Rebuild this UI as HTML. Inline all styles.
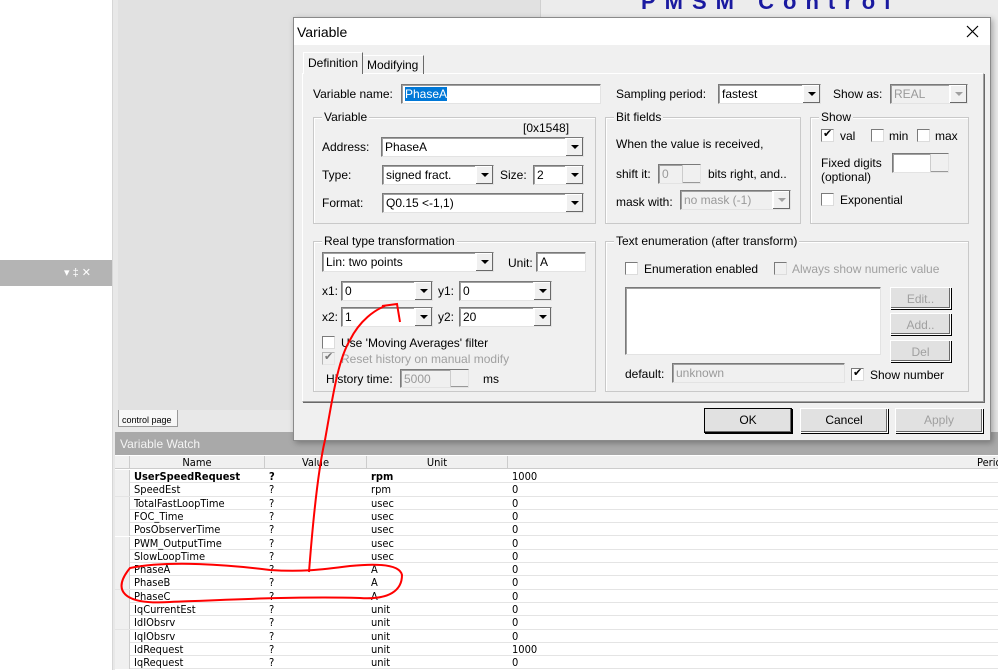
<!DOCTYPE html>
<html><head><meta charset="utf-8"><style>
*{margin:0;padding:0;box-sizing:border-box}
body{width:998px;height:670px;overflow:hidden;position:relative;background:#e1e1e1;font-family:"Liberation Sans",sans-serif;font-size:12px;color:#000}
.a{position:absolute}
.t{position:absolute;white-space:nowrap;line-height:14px}
.in{position:absolute;background:#fff;border:1px solid #7a7a7a;border-right-color:#e3e3e3;border-bottom-color:#e3e3e3;box-shadow:inset 1px 1px 0 #a0a0a0;padding:1px 3px;line-height:16px;white-space:nowrap}
.dd::after{content:"";position:absolute;right:0;top:0;bottom:0;width:17px;background:#f0f0f0;border-left:1px solid #fff;box-shadow:inset -1px -1px 0 #696969,inset 1px 1px 0 #fff}
.dd::before{content:"";position:absolute;right:4px;top:7px;border:4px solid transparent;border-top:4px solid #000;border-bottom:0;z-index:2}
.dis{background:#f0f0f0;color:#9a9a9a}
.dis.dd::before{border-top-color:#a0a0a0}
.sp::after{content:"";position:absolute;right:0;top:0;bottom:0;width:17px;background:#f0f0f0;border-left:1px solid #ccc;box-shadow:inset 0 -9px 0 -8px #999}
.grp{position:absolute;border:1px solid #c9c9c9;box-shadow:1px 1px 0 #fff inset}
.gl{position:absolute;top:-8px;left:8px;background:#f0f0f0;padding:0 2px;line-height:14px;white-space:nowrap}
.cb{position:absolute;width:13px;height:13px;background:#fff;border:1px solid #7a7a7a;border-right-color:#dcdcdc;border-bottom-color:#dcdcdc}
.cb.dis{background:#f0f0f0}
.chk::after{content:"✔";position:absolute;left:1px;top:-3px;font-size:11px;color:#000}
.btn{position:absolute;background:#e1e1e1;border:1px solid #fff;box-shadow:inset -1px -1px 0 #696969,1px 1px 0 #000 ;text-align:center;line-height:22px}
.g{color:#a0a0a0}
.row{position:absolute;left:115px;width:883px;height:13.3px;border-bottom:1px solid #e4e4e4;background:#fff;font-size:11px;line-height:13px;font-family:"DejaVu Sans Condensed","Liberation Sans",sans-serif}
.row span{position:absolute;top:0}
</style></head><body>
<div class="a" style="left:0;top:0;width:112px;height:670px;background:#fff"></div>
<div class="a" style="left:112px;top:0;width:6px;height:670px;background:#e8e8e8;border-left:1px solid #d6d6d6"></div>
<div class="a" style="left:0;top:260px;width:112px;height:26px;background:#b4b4b4"></div>
<div class="t" style="left:64px;top:266px;color:#fff;font-size:11px">▾ ‡ ✕</div>
<div class="a" style="left:540px;top:0;width:458px;height:17px;background:#ececec;border-left:1px solid #d0d0d0;overflow:hidden"><div class="t" style="left:100px;top:-10px;color:#1a1aa0;font-size:22px;line-height:24px;font-weight:bold;letter-spacing:9px">PMSM&nbsp;Control</div></div>
<div class="a" style="left:991px;top:17px;width:7px;height:420px;background:#ececec"></div>
<div class="a" style="left:118px;top:300px;width:175px;height:126px;background:#e1e1e1"></div>
<div class="a" style="left:118px;top:410px;width:880px;height:22px;background:#e8e8e8"></div>
<div class="a" style="left:118px;top:410px;width:60px;height:17px;background:#f7f7f7;border:1px solid #999;border-top:none"></div>
<div class="t" style="left:122px;top:413px;font-size:9px">control page</div>
<div class="a" style="left:115px;top:432px;width:883px;height:23px;background:#a9a9a9"></div>
<div class="t" style="left:120px;top:437px;color:#f4f4f4;font-size:12px">Variable Watch</div>
<div class="a" style="left:115px;top:455px;width:883px;height:215px;background:#fff"></div>
<div class="row" style="top:456px;background:#f0f0f0;border-bottom:1px solid #ccc">
<span style="left:0;width:15px;height:13px;border-right:1px solid #ccc"></span>
<span style="left:15px;width:135px;text-align:center;border-right:1px solid #ccc">Name</span>
<span style="left:150px;width:102px;text-align:center;border-right:1px solid #ccc">Value</span>
<span style="left:252px;width:141px;text-align:center;border-right:1px solid #ccc">Unit</span>
<span style="left:862px">Perio</span></div>
<div id="rows"></div>
<div class="a" style="left:293px;top:17px;width:698px;height:424px;background:#f0f0f0;border:1px solid #8a8a8a;box-shadow:2px 2px 6px rgba(0,0,0,.3)"></div>
<div class="a" style="left:294px;top:18px;width:696px;height:27px;background:#fff"></div>
<div class="t" style="left:297px;top:24px;font-size:14px;line-height:16px">Variable</div>
<svg class="a" style="left:966px;top:25px" width="13" height="13"><path d="M1 1L12 12M12 1L1 12" stroke="#000" stroke-width="1.2"/></svg>
<div class="a" style="left:302px;top:73px;width:682px;height:329px;border:1px solid #fff;border-right-color:#a0a0a0;border-bottom-color:#a0a0a0;box-shadow:1px 1px 0 #696969"></div>
<div class="a" style="left:303px;top:52px;width:60px;height:23px;background:#f0f0f0;border:1px solid #fff;border-bottom:none;border-right:1px solid #696969"></div>
<div class="t" style="left:308px;top:56px">Definition</div>
<div class="a" style="left:363px;top:55px;width:61px;height:19px;border-top:1px solid #fff;border-right:1px solid #696969"></div>
<div class="t" style="left:367px;top:58px">Modifying</div>
<div class="a" style="left:303px;top:74px;width:60px;height:2px;background:#f0f0f0"></div>
<div class="t" style="left:313px;top:87px">Variable name:</div>
<div class="in" style="left:401px;top:84px;width:200px;height:20px"><span style="background:#0078d7;color:#fff">PhaseA</span></div>
<div class="t" style="left:616px;top:87px">Sampling period:</div>
<div class="in dd" style="left:718px;top:84px;width:103px;height:20px">fastest</div>
<div class="t" style="left:833px;top:87px">Show as:</div>
<div class="in dd dis" style="left:890px;top:84px;width:78px;height:20px">REAL</div>
<div class="grp" style="left:313px;top:117px;width:283px;height:107px"><div class="gl">Variable</div></div>
<div class="t" style="left:523px;top:121px">[0x1548]</div>
<div class="t" style="left:322px;top:140px">Address:</div>
<div class="in dd" style="left:381px;top:137px;width:203px;height:20px">PhaseA</div>
<div class="t" style="left:322px;top:168px">Type:</div>
<div class="in dd" style="left:382px;top:165px;width:112px;height:20px">signed fract.</div>
<div class="t" style="left:500px;top:168px">Size:</div>
<div class="in dd" style="left:533px;top:165px;width:51px;height:20px">2</div>
<div class="t" style="left:322px;top:196px">Format:</div>
<div class="in dd" style="left:382px;top:193px;width:202px;height:20px">Q0.15 &lt;-1,1)</div>
<div class="grp" style="left:605px;top:117px;width:196px;height:107px"><div class="gl">Bit fields</div></div>
<div class="t" style="left:616px;top:137px">When the value is received,</div>
<div class="t" style="left:616px;top:167px">shift it:</div>
<div class="in dis sp" style="left:658px;top:164px;width:43px;height:20px">0</div>
<div class="t" style="left:708px;top:167px">bits right, and..</div>
<div class="t" style="left:616px;top:195px">mask with:</div>
<div class="in dd dis" style="left:680px;top:190px;width:111px;height:20px">no mask (-1)</div>
<div class="grp" style="left:810px;top:117px;width:159px;height:107px"><div class="gl">Show</div></div>
<div class="cb chk" style="left:821px;top:129px"></div><div class="t" style="left:840px;top:129px">val</div>
<div class="cb" style="left:871px;top:129px"></div><div class="t" style="left:889px;top:129px">min</div>
<div class="cb" style="left:917px;top:129px"></div><div class="t" style="left:935px;top:129px">max</div>
<div class="t" style="left:821px;top:156px">Fixed digits<br>(optional)</div>
<div class="in sp" style="left:892px;top:153px;width:57px;height:20px"></div>
<div class="cb" style="left:821px;top:193px"></div><div class="t" style="left:840px;top:193px">Exponential</div>
<div class="grp" style="left:313px;top:241px;width:283px;height:151px"><div class="gl">Real type transformation</div></div>
<div class="in dd" style="left:322px;top:252px;width:172px;height:20px">Lin: two points</div>
<div class="t" style="left:508px;top:256px">Unit:</div>
<div class="in" style="left:536px;top:252px;width:50px;height:20px">A</div>
<div class="t" style="left:322px;top:284px">x1:</div>
<div class="in dd" style="left:341px;top:281px;width:92px;height:20px">0</div>
<div class="t" style="left:438px;top:284px">y1:</div>
<div class="in dd" style="left:459px;top:281px;width:93px;height:20px">0</div>
<div class="t" style="left:322px;top:310px">x2:</div>
<div class="in dd" style="left:341px;top:307px;width:92px;height:20px">1</div>
<div class="t" style="left:438px;top:310px">y2:</div>
<div class="in dd" style="left:459px;top:307px;width:93px;height:20px">20</div>
<div class="cb" style="left:322px;top:336px"></div><div class="t" style="left:341px;top:336px">Use 'Moving Averages' filter</div>
<div class="cb dis chk" style="left:322px;top:352px;opacity:.5"></div><div class="t g" style="left:341px;top:352px">Reset history on manual modify</div>
<div class="t" style="left:326px;top:372px">History time:</div>
<div class="in dis sp" style="left:400px;top:369px;width:69px;height:19px">5000</div>
<div class="t" style="left:483px;top:372px">ms</div>
<div class="grp" style="left:605px;top:241px;width:364px;height:151px"><div class="gl">Text enumeration (after transform)</div></div>
<div class="cb" style="left:625px;top:262px"></div><div class="t" style="left:644px;top:262px">Enumeration enabled</div>
<div class="cb dis" style="left:774px;top:262px"></div><div class="t g" style="left:792px;top:262px">Always show numeric value</div>
<div class="in" style="left:625px;top:287px;width:256px;height:68px"></div>
<div class="btn g" style="left:890px;top:287px;width:61px;height:22px">Edit..</div>
<div class="btn g" style="left:890px;top:313px;width:61px;height:22px">Add..</div>
<div class="btn g" style="left:890px;top:340px;width:61px;height:22px">Del</div>
<div class="t" style="left:625px;top:367px">default:</div>
<div class="in dis" style="left:672px;top:363px;width:173px;height:20px">unknown</div>
<div class="cb chk" style="left:851px;top:368px"></div><div class="t" style="left:870px;top:368px">Show number</div>
<div class="btn" style="left:704px;top:408px;width:88px;height:25px;border:1px solid #000">OK</div>
<div class="btn" style="left:800px;top:408px;width:88px;height:25px">Cancel</div>
<div class="btn g" style="left:895px;top:408px;width:88px;height:25px">Apply</div>
<svg class="a" style="left:0;top:0" width="998" height="670">
<path d="M309 572 C313 520 318 470 325 440 C333 395 338 360 350 340 C360 320 375 310 385 306 M382 306 L397 304 L400 322" fill="none" stroke="#f00" stroke-width="2"/>
<path d="M270 570 C230 565 170 560 130 568 C112 590 122 605 170 602 C220 600 300 596 360 598 C390 600 402 590 402 575 C400 565 380 563 350 566 C320 570 300 572 270 570" fill="none" stroke="#f00" stroke-width="2"/>
</svg>
<script>
var d=[["UserSpeedRequest","?","rpm","1000",1],["SpeedEst","?","rpm","0"],["TotalFastLoopTime","?","usec","0"],["FOC_Time","?","usec","0"],["PosObserverTime","?","usec","0"],["PWM_OutputTime","?","usec","0"],["SlowLoopTime","?","usec","0"],["PhaseA","?","A","0"],["PhaseB","?","A","0"],["PhaseC","?","A","0"],["IqCurrentEst","?","unit","0"],["IdIObsrv","?","unit","0"],["IqIObsrv","?","unit","0"],["IdRequest","?","unit","1000"],["IqRequest","?","unit","0"]];
var h="";d.forEach(function(r,i){var b=r[4]?'font-weight:bold;':'';h+='<div class="row" style="top:'+(470+i*13.3)+'px"><span style="left:0;width:15px;height:13px;background:#f0f0f0;border-right:1px solid #ccc"></span><span style="left:19px;'+b+'">'+r[0]+'</span><span style="left:154px;'+b+'">'+r[1]+'</span><span style="left:256px;'+b+'">'+r[2]+'</span><span style="left:397px">'+r[3]+'</span></div>'});
document.getElementById("rows").outerHTML=h;
</script>
</body></html>
